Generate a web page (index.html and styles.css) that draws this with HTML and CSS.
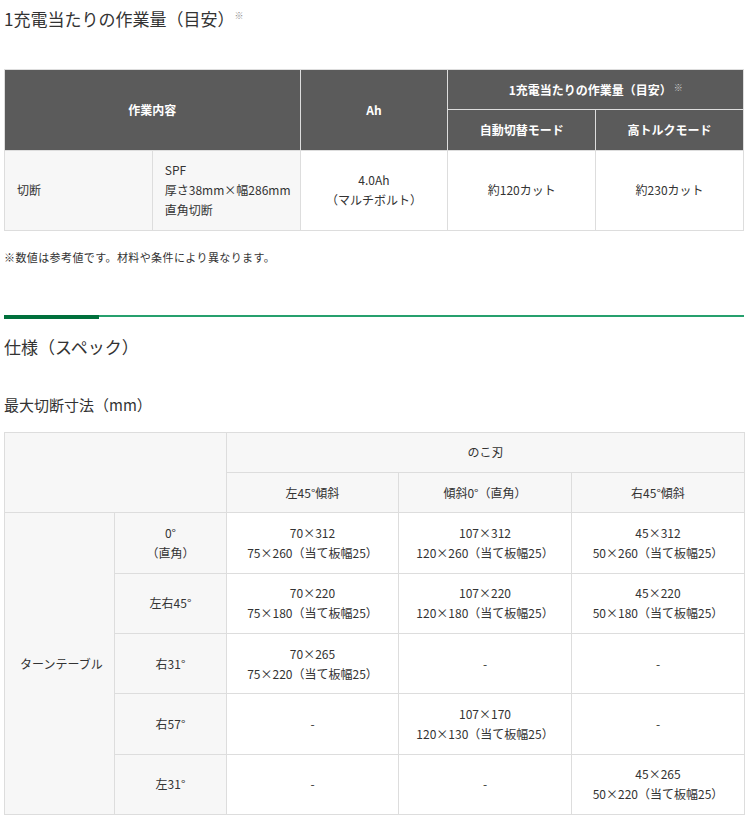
FILE: index.html
```html
<!DOCTYPE html>
<html lang="ja">
<head>
<meta charset="utf-8">
<link rel="stylesheet" href="styles.css">
</head>
<body>
<div class="page">
  <h2 class="title">1充電当たりの作業量（目安）<sup class="mark">※</sup></h2>

  <table class="work">
    <colgroup><col><col><col><col><col></colgroup>
    <tr>
      <th colspan="2" rowspan="2">作業内容</th>
      <th rowspan="2">Ah</th>
      <th colspan="2">1充電当たりの作業量（目安）<sup class="mark">※</sup></th>
    </tr>
    <tr>
      <th>自動切替モード</th>
      <th>高トルクモード</th>
    </tr>
    <tr>
      <td class="lbl">切断</td>
      <td class="lbl">SPF<br>厚さ38mm×幅286mm<br>直角切断</td>
      <td>4.0Ah<br>（マルチボルト）</td>
      <td>約120カット</td>
      <td>約230カット</td>
    </tr>
  </table>

  <p class="note">※数値は参考値です。材料や条件により異なります。</p>

  <div class="divider"></div>

  <h2 class="section">仕様（スペック）</h2>
  <h3 class="sub">最大切断寸法（mm）</h3>

  <table class="spec">
    <colgroup>
      <col class="c1"><col class="c2"><col class="c3"><col class="c4"><col class="c5">
    </colgroup>
    <tr>
      <th colspan="2" rowspan="2"></th>
      <th colspan="3">のこ刃</th>
    </tr>
    <tr>
      <th>左45°傾斜</th>
      <th>傾斜0°（直角）</th>
      <th>右45°傾斜</th>
    </tr>
    <tr>
      <td class="lbl left" rowspan="5">ターンテーブル</td>
      <td class="lbl">0°<br>（直角）</td>
      <td>70×312<br>75×260（当て板幅25）</td>
      <td>107×312<br>120×260（当て板幅25）</td>
      <td>45×312<br>50×260（当て板幅25）</td>
    </tr>
    <tr>
      <td class="lbl">左右45°</td>
      <td>70×220<br>75×180（当て板幅25）</td>
      <td>107×220<br>120×180（当て板幅25）</td>
      <td>45×220<br>50×180（当て板幅25）</td>
    </tr>
    <tr>
      <td class="lbl">右31°</td>
      <td>70×265<br>75×220（当て板幅25）</td>
      <td>-</td>
      <td>-</td>
    </tr>
    <tr>
      <td class="lbl">右57°</td>
      <td>-</td>
      <td>107×170<br>120×130（当て板幅25）</td>
      <td>-</td>
    </tr>
    <tr>
      <td class="lbl">左31°</td>
      <td>-</td>
      <td>-</td>
      <td>45×265<br>50×220（当て板幅25）</td>
    </tr>
  </table>
</div>
</body>
</html>
```

FILE: styles.css
```css
html, body {
  margin: 0;
  padding: 0;
  background: #fff;
}
body {
  font-family: "Noto Sans CJK JP", "Noto Sans", sans-serif;
  color: #333;
}
.page {
  width: 740px;
  margin-left: 4px;
}
.title {
  margin: 0;
  padding-top: 7px;
  font-size: 17px;
  line-height: 24px;
  font-weight: normal;
}
.mark {
  font-size: 9px;
  color: #8c8c8c;
  vertical-align: top;
  line-height: 9px;
  margin-left: 0;
  position: relative;
  top: 4px;
}
table {
  width: 740px;
  border-collapse: collapse;
  table-layout: fixed;
  font-size: 12px;
  line-height: 20px;
}
th, td {
  border: 1px solid #ddd;
  padding: 9.65px 8px;
  text-align: center;
  vertical-align: middle;
}
.work {
  margin-top: 38px;
}
.work th {
  background: #5b5b5b;
  color: #fff;
  font-weight: bold;
}
.work th .mark {
  color: #d0d0d0;
  font-weight: normal;
  top: 3px;
  margin-left: 2px;
}
.work td.lbl {
  background: #f7f7f7;
  text-align: left;
  padding-left: 12px;
}
.note {
  margin: 17px 0 0;
  font-size: 11px;
  line-height: 18px;
  letter-spacing: 0.4px;
}
.divider {
  margin-top: 49px;
  height: 4px;
  border-top: 2px solid #26a06d;
  box-sizing: border-box;
  position: relative;
}
.divider::before {
  content: "";
  position: absolute;
  left: 0;
  top: -2px;
  width: 95px;
  height: 4px;
  background: #00703c;
}
.section {
  margin: 15px 0 0;
  font-size: 17px;
  line-height: 26px;
  font-weight: normal;
}
.sub {
  margin: 34px 0 0;
  font-size: 15px;
  line-height: 22px;
  font-weight: normal;
}
.spec {
  margin-top: 16px;
}
.spec .c1 { width: 110px; }
.spec .c2 { width: 112px; }
.spec .c3 { width: 172px; }
.spec .c4 { width: 173px; }
.spec .c5 { width: 173px; }
.spec th {
  background: #f7f7f7;
  font-weight: normal;
}
.spec td.lbl {
  background: #f7f7f7;
}
.spec td.left {
  text-align: left;
  padding-left: 15px;
}
```
